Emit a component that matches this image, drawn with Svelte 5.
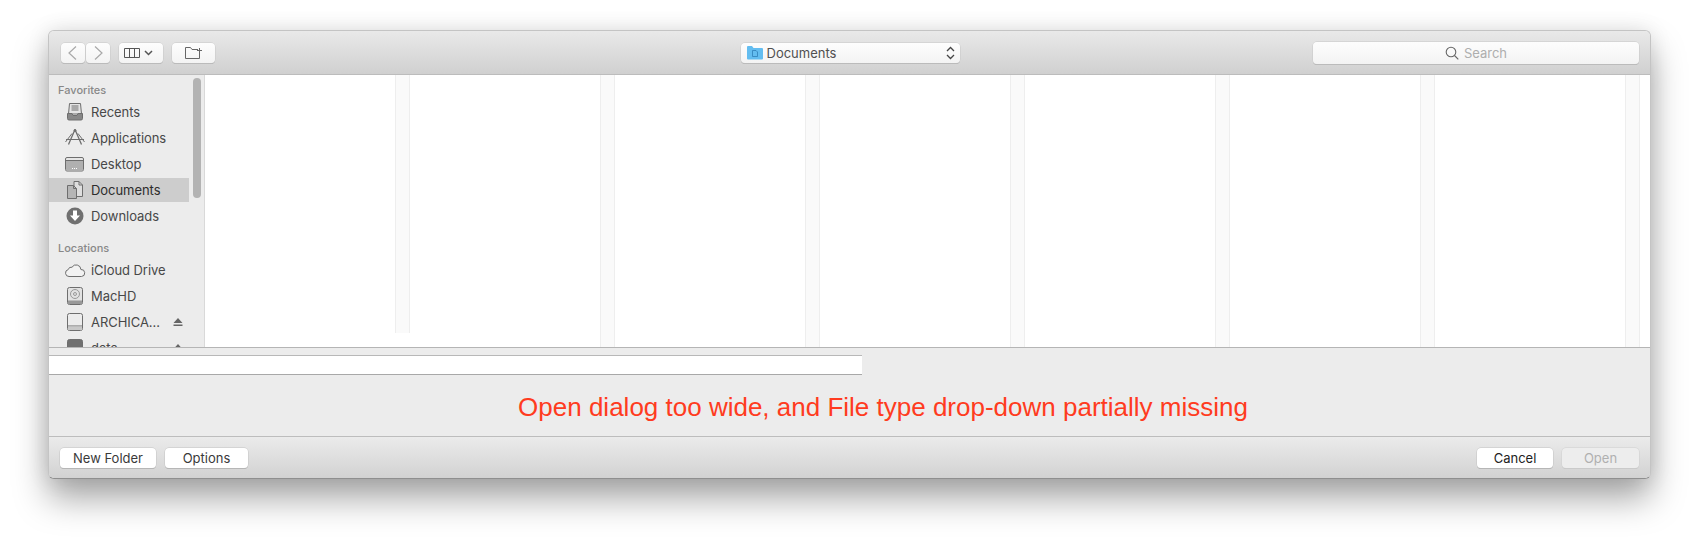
<script lang="ts">
  const favorites = [
    { name: 'Recents', icon: 'recents' },
    { name: 'Applications', icon: 'apps' },
    { name: 'Desktop', icon: 'desktop' },
    { name: 'Documents', icon: 'docs', selected: true },
    { name: 'Downloads', icon: 'downloads' }
  ];
  const locations = [
    { name: 'iCloud Drive', icon: 'cloud' },
    { name: 'MacHD', icon: 'hd' },
    { name: 'ARCHICA...', icon: 'ext', eject: true },
    { name: 'data', icon: 'data', eject: true }
  ];
  const columns = [0, 1, 2, 3, 4, 5, 6];
</script>

{#snippet icon(kind)}
  <svg class="side-icon" viewBox="0 0 22 20" width="22" height="20" fill="none" stroke="#6e6e6e" stroke-width="1">
    {#if kind === 'recents'}
      <path d="M5.500 1.500h11l1 10.500h-13z" fill="#e4e4e4" />
      <path d="M7.500 4h7M7.500 6h7M7.500 8h7" />
      <path d="M3.500 11.500h4.500l1 2h4l1-2h4.500v5a1.500 1.500 0 0 1-1.500 1.500h-12a1.500 1.500 0 0 1-1.500-1.500z" fill="#888" />
    {:else if kind === 'apps'}
      <path d="M11 1.500l6.500 15M11 1.500l-6.500 15" stroke-width="1.300" />
      <circle cx="11" cy="2.500" r="1" fill="#6e6e6e" />
      <path d="M8 5.500L1.500 14M14 5.500l6.500 8.500M2 11.500h18" />
    {:else if kind === 'desktop'}
      <rect x="1.500" y="3.500" width="18" height="13.500" rx="1.500" fill="#e6e6e6" />
      <path d="M2 6.500h17" />
      <path d="M2 7h17v9a.5.5 0 0 1-.5.5h-16a.5.5 0 0 1-.5-.5z" fill="#b0b0b0" stroke="none" />
      <path d="M8 14.500h5" stroke="#fff" stroke-dasharray="1 1" />
    {:else if kind === 'docs'}
      <path d="M10 1.500h5l3.500 3.500v11.500h-8.500z" fill="#dedede" />
      <path d="M15 1.500V5h3.500" />
      <path d="M3.500 5.500h6l3 3v10h-9z" fill="#b5b5b5" />
      <path d="M9.500 5.500v3h3" />
    {:else if kind === 'downloads'}
      <circle cx="11" cy="10" r="8.500" fill="#707070" stroke="none" />
      <path d="M9 4.500h4v5h3l-5 5.500-5-5.500h3z" fill="#fff" stroke="none" />
    {:else if kind === 'cloud'}
      <path d="M5 16.500a3.500 3.500 0 0 1-.8-6.900 3.300 3.300 0 0 1 3.800-2.400 4.800 4.800 0 0 1 8.900 2.300 3.500 3.500 0 0 1 .6 7z" fill="#f2f2f2" />
    {:else if kind === 'hd'}
      <rect x="3.500" y="1.500" width="15" height="17" rx="2" fill="#e2e2e2" />
      <circle cx="11" cy="8" r="4.500" stroke="#999" />
      <circle cx="11" cy="8" r="1.500" stroke="#999" />
      <path d="M4 14.500h14v3.500H4z" fill="#999" stroke="none" />
    {:else if kind === 'ext'}
      <rect x="3.500" y="1.500" width="15" height="17" rx="2" fill="#ececec" />
      <path d="M4 14h14" />
      <path d="M4 14.500h14v3.500H4z" fill="#c8c8c8" stroke="none" />
    {:else}
      <rect x="3.500" y="1.500" width="15" height="17" rx="2" fill="#707070" />
    {/if}
  </svg>
{/snippet}

<div class="page">
  <div class="window">
    <header class="toolbar">
      <div class="left-tools">
        <div class="nav-pair">
          <button class="tool nav" aria-label="Back">
            <svg viewBox="0 0 24 20" width="24" height="20" fill="none" stroke="#a9a9a9" stroke-width="1.200"><path d="M15 3.500L8 10l7 6.500" /></svg>
          </button>
          <button class="tool nav" aria-label="Forward">
            <svg viewBox="0 0 24 20" width="24" height="20" fill="none" stroke="#a9a9a9" stroke-width="1.200"><path d="M9 3.500L16 10l-7 6.500" /></svg>
          </button>
        </div>
        <button class="tool view" aria-label="View">
          <svg viewBox="0 0 38 20" width="38" height="20" fill="none" stroke="#555" stroke-width="1"><path d="M2.500 5.500h15v9h-15zM7.500 5.500v9M12.500 5.500v9" /><path d="M23 8l3.500 3.500L30 8" stroke-width="1.500" /></svg>
        </button>
        <button class="tool add" aria-label="New folder">
          <svg viewBox="0 0 20 16" width="20" height="16" fill="none" stroke="#666" stroke-width="1"><path d="M15.500 7v6.500h-14v-11h5l1.500 2h6" /><path d="M15.500 3v5M13 5.500h5" /></svg>
        </button>
      </div>

      <div class="path-popup">
        <svg class="folder" viewBox="0 0 16 15" width="16" height="15">
          <path d="M0 2a1 1 0 0 1 1-1h4l1.500 2H15a1 1 0 0 1 1 1v9.500a1 1 0 0 1-1 1H1a1 1 0 0 1-1-1z" fill="#63bdf0" />
          <path d="M5.500 5.500h3.500l1.500 1.500v4.500h-5z" fill="none" stroke="#2f7fb8" stroke-width=".8" />
        </svg>
        <span>Documents</span>
        <svg class="updown" viewBox="0 0 9 14" width="9" height="14" fill="none" stroke="#444" stroke-width="1.300"><path d="M1 5l3.500-3.500L8 5M1 9l3.500 3.500L8 9" /></svg>
      </div>

      <div class="search">
        <svg viewBox="0 0 14 14" width="14" height="14" fill="none" stroke="#666" stroke-width="1.100"><circle cx="6" cy="6" r="4.800" /><path d="M9.500 9.500l3.800 3.800" /></svg>
        <span>Search</span>
      </div>
    </header>

    <div class="browser">
      <aside class="sidebar">
        <div class="side-head first">Favorites</div>
        {#each favorites as item}
          <div class="side-row" class:selected={item.selected}>
            {@render icon(item.icon)}
            <span>{item.name}</span>
          </div>
        {/each}
        <div class="side-head">Locations</div>
        {#each locations as item}
          <div class="side-row">
            {@render icon(item.icon)}
            <span>{item.name}</span>
            {#if item.eject}
              <svg class="eject" viewBox="0 0 10 10" width="10" height="10"><path d="M5 1l4.500 5h-9z M.5 7.500h9v1.500h-9z" fill="#666" /></svg>
            {/if}
          </div>
        {/each}
        <div class="thumb"></div>
      </aside>

      <div class="columns">
        {#each columns as col}
          <div class="column">
            <div class="col-body"></div>
            <div class="col-strip" class:short={col === 0}></div>
          </div>
        {/each}
        <div class="col-rest"></div>
      </div>
    </div>

    <div class="middle">
      <div class="name-field"></div>
      <p class="note">Open dialog too wide, and File type drop-down partially missing</p>
    </div>

    <footer class="actions">
      <div class="btn-group">
        <button class="btn new-folder">New Folder</button>
        <button class="btn options">Options</button>
      </div>
      <div class="btn-group">
        <button class="btn cancel">Cancel</button>
        <button class="btn open" disabled>Open</button>
      </div>
    </footer>
  </div>
</div>

<style>
  :global(body) {
    margin: 0;
    background: #fff;
    font-family: Inter, "Liberation Sans", sans-serif;
  }

  .page {
    height: 545px;
    box-sizing: border-box;
    padding: 30px 48px 0;
    overflow: hidden;
  }

  .window {
    width: 1603px;
    height: 449px;
    box-sizing: border-box;
    display: flex;
    flex-direction: column;
    border-radius: 6px;
    border: 1px solid #c4c4c4;
    border-bottom-color: #8f8f8f;
    overflow: hidden;
    box-shadow: 0 20px 34px rgba(0, 0, 0, 0.34), 0 0 22px rgba(0, 0, 0, 0.1);
    background: #ececec;
  }

  .toolbar {
    flex: none;
    height: 44px;
    box-sizing: border-box;
    padding: 0 11px 0 12px;
    display: grid;
    grid-template-columns: 1fr 219px 1fr;
    align-items: center;
    background: linear-gradient(#e9e9e9, #d0d0d0);
    border-bottom: 1px solid #bcbcbc;
  }

  .left-tools {
    display: flex;
    align-items: center;
    gap: 9px;
  }

  .nav-pair {
    display: flex;
    gap: 1px;
  }

  .tool,
  .path-popup,
  .search {
    box-sizing: border-box;
    background: linear-gradient(#fdfdfd, #f3f3f3);
    border: none;
    border-radius: 4px;
    box-shadow: 0 0 0 0.5px #c8c8c8, 0 1px 0 #aeaeae;
  }

  .tool {
    height: 20px;
    padding: 0;
    display: flex;
    align-items: center;
    justify-content: center;
  }

  .nav { width: 24px; }
  .view { width: 44px; }
  .add { width: 43px; }

  .path-popup {
    height: 20px;
    padding: 0 4px 0 6px;
    display: flex;
    align-items: center;
    gap: 4px;
    font-size: 13px;
    color: #505050;
  }

  .updown { margin-left: auto; margin-right: 1px; }

  .search {
    height: 22px;
    width: 326px;
    justify-self: end;
    display: flex;
    align-items: center;
    justify-content: center;
    gap: 5px;
    font-size: 13px;
    color: #aeaeae;
  }

  .browser {
    flex: none;
    height: 272px;
    display: flex;
    overflow: hidden;
    border-bottom: 1px solid #b5b5b5;
  }

  .sidebar {
    position: relative;
    flex: none;
    width: 156px;
    box-sizing: border-box;
    background: #ececec;
    border-right: 1px solid #d9d9d9;
    overflow: hidden;
  }

  .side-head {
    height: 20px;
    margin-top: 10px;
    padding-left: 9px;
    display: flex;
    align-items: center;
    font-size: 11px;
    font-weight: 500;
    color: #888;
  }

  .side-head.first {
    margin-top: 5px;
  }

  .side-row {
    width: 140px;
    height: 24px;
    margin-bottom: 2px;
    box-sizing: border-box;
    padding-left: 15px;
    display: flex;
    align-items: center;
    gap: 5px;
    font-size: 13px;
    letter-spacing: -0.05px;
    color: #484848;
  }

  .side-row.selected {
    background: #cdcdcd;
    color: #2c2c2c;
  }

  .side-icon { flex: none; }

  .eject {
    margin-left: auto;
    margin-right: 6px;
  }

  .thumb {
    position: absolute;
    top: 3px;
    left: 144px;
    width: 8px;
    height: 120px;
    border-radius: 4px;
    background: #b3b3b3;
  }

  .columns {
    flex: 1;
    display: flex;
    background: #fff;
  }

  .column {
    flex: none;
    width: 205px;
    display: flex;
  }

  .col-body {
    flex: 1;
    background: #fff;
  }

  .col-strip {
    flex: none;
    width: 15px;
    box-sizing: border-box;
    background: #fafafa;
    border-left: 1px solid #eeeeee;
    border-right: 1px solid #eeeeee;
  }

  .col-strip.short {
    height: 258px;
  }

  .col-rest {
    flex: 1;
  }

  .middle {
    flex: none;
    height: 89px;
    box-sizing: border-box;
    padding-top: 7px;
    background: #ececec;
    border-bottom: 1px solid #bdbdbd;
  }

  .name-field {
    width: 813px;
    height: 20px;
    box-sizing: border-box;
    background: #fff;
    border-top: 1px solid #b8b8b8;
    border-bottom: 1px solid #a8a8a8;
  }

  .note {
    margin: 17px 0 0;
    padding-left: 67px;
    text-align: center;
    font-family: "Liberation Sans", Arial, sans-serif;
    font-size: 26px;
    line-height: 30px;
    color: #ff3b20;
  }

  .actions {
    flex: 1;
    padding: 0 11px;
    display: flex;
    align-items: center;
    justify-content: space-between;
    background: linear-gradient(#ebebeb, #d2d2d2);
  }

  .btn-group {
    display: flex;
    gap: 9px;
  }

  .btn {
    height: 20px;
    padding: 0;
    box-sizing: border-box;
    border: none;
    border-radius: 4px;
    background: #fff;
    box-shadow: 0 0 0 0.5px #c4c4c4, 0 1px 0 #a9a9a9;
    font-family: Inter, "Liberation Sans", sans-serif;
    font-size: 13px;
    color: #3a3a3a;
  }

  .new-folder { width: 96px; }
  .options { width: 83px; }
  .cancel { width: 76px; color: #222; }

  .open {
    width: 77px;
    background: #ededed;
    color: #b0b0b0;
    box-shadow: 0 0 0 0.5px #cfcfcf, 0 1px 0 #c4c4c4;
  }
</style>
